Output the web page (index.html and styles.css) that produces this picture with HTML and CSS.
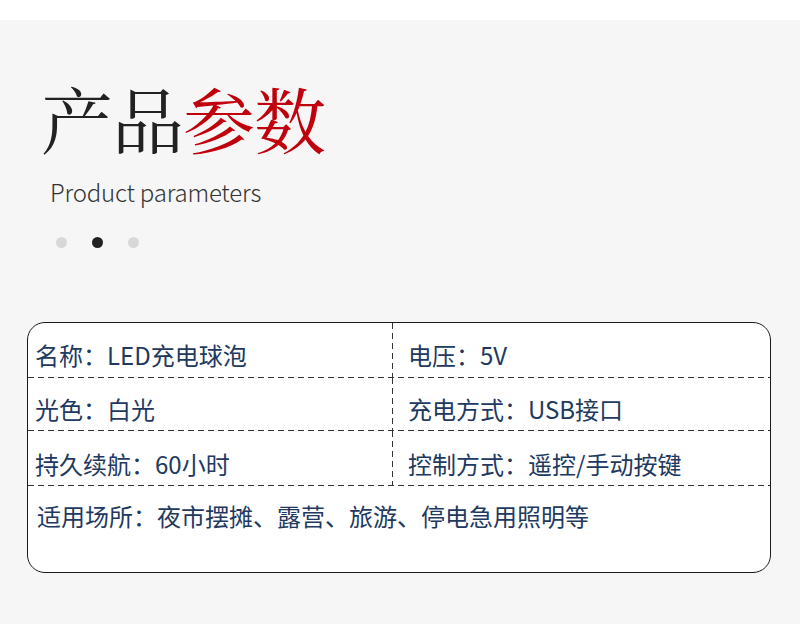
FILE: index.html
```html
<!DOCTYPE html>
<html lang="zh-CN">
<head>
<meta charset="utf-8">
<link rel="stylesheet" href="styles.css">
</head>
<body>
<div class="topband"></div>
<main class="page">
  <h1 class="title"><span class="dark">产品</span><span class="red">参数</span></h1>
  <p class="subtitle">Product parameters</p>
  <div class="dots"><span class="dot"></span><span class="dot active"></span><span class="dot"></span></div>
  <section class="params">
    <div class="row r1">
      <div class="cell left">名称：LED充电球泡</div>
      <div class="cell right">电压：5V</div>
    </div>
    <div class="row r2">
      <div class="cell left">光色：白光</div>
      <div class="cell right">充电方式：USB接口</div>
    </div>
    <div class="row r3">
      <div class="cell left">持久续航：60小时</div>
      <div class="cell right">控制方式：遥控/手动按键</div>
    </div>
    <div class="row r4">
      <div class="cell full">适用场所：夜市摆摊、露营、旅游、停电急用照明等</div>
    </div>
  </section>
</main>
</body>
</html>
```
FILE: styles.css
```css
html, body {
  margin: 0;
  padding: 0;
}
body {
  background: #f6f6f6;
  width: 800px;
  height: 624px;
  overflow: hidden;
}
.topband {
  height: 20px;
  background: #ffffff;
}
.page {
  padding: 0 0 0 27px;
}
.title {
  margin: 0;
  padding: 57px 0 0 14px;
  font-family: "Noto Serif CJK SC", "Source Han Serif SC", "Noto Sans CJK SC", serif;
  font-weight: 400;
  font-size: 72px;
  line-height: 80px;
  letter-spacing: -1px;
}
.dark { color: #222222; }
.red { color: #c0000c; }
.subtitle {
  margin: 0;
  padding: 20px 0 0 23px;
  font-family: "Noto Sans CJK SC", "Noto Sans", sans-serif;
  font-weight: 300;
  font-size: 24px;
  line-height: 30px;
  letter-spacing: -0.2px;
  color: #333333;
}
.dots {
  display: flex;
  gap: 25px;
  padding: 30px 0 0 29px;
}
.dot {
  width: 11px;
  height: 11px;
  border-radius: 50%;
  background: #d8d8d8;
}
.dot.active {
  background: #222222;
}
.params {
  margin-top: 74px;
  width: 742px;
  height: 249px;
  border: 1px solid #1a1a1a;
  border-radius: 18px;
  background: #ffffff;
  font-family: "Noto Sans CJK SC", "Noto Sans", sans-serif;
  font-size: 24px;
  line-height: 24px;
  color: #22395f;
  display: flex;
  flex-direction: column;
  overflow: hidden;
}
.row {
  display: flex;
  box-sizing: border-box;
  background-image: repeating-linear-gradient(to right, #333 0, #333 6px, transparent 6px, transparent 10px);
  background-size: 100% 1px;
  background-position: left bottom;
  background-repeat: no-repeat;
}
.r1 { height: 55px; }
.r2 { height: 53px; }
.r3 { height: 55px; }
.r4 { flex: 1; background-image: none; }
.cell {
  box-sizing: border-box;
  white-space: nowrap;
}
.left {
  width: 365px;
  padding: 20px 0 0 7px;
  background-image: repeating-linear-gradient(to bottom, #333 0, #333 6px, transparent 6px, transparent 10px);
  background-size: 1px 100%;
  background-position: right top;
  background-repeat: no-repeat;
}
.r2 .left, .r2 .right { padding-top: 19px; }
.r3 .left, .r3 .right { padding-top: 21px; }
.right {
  flex: 1;
  padding: 20px 0 0 15px;
}
.full {
  padding: 18px 0 0 9px;
}
```
